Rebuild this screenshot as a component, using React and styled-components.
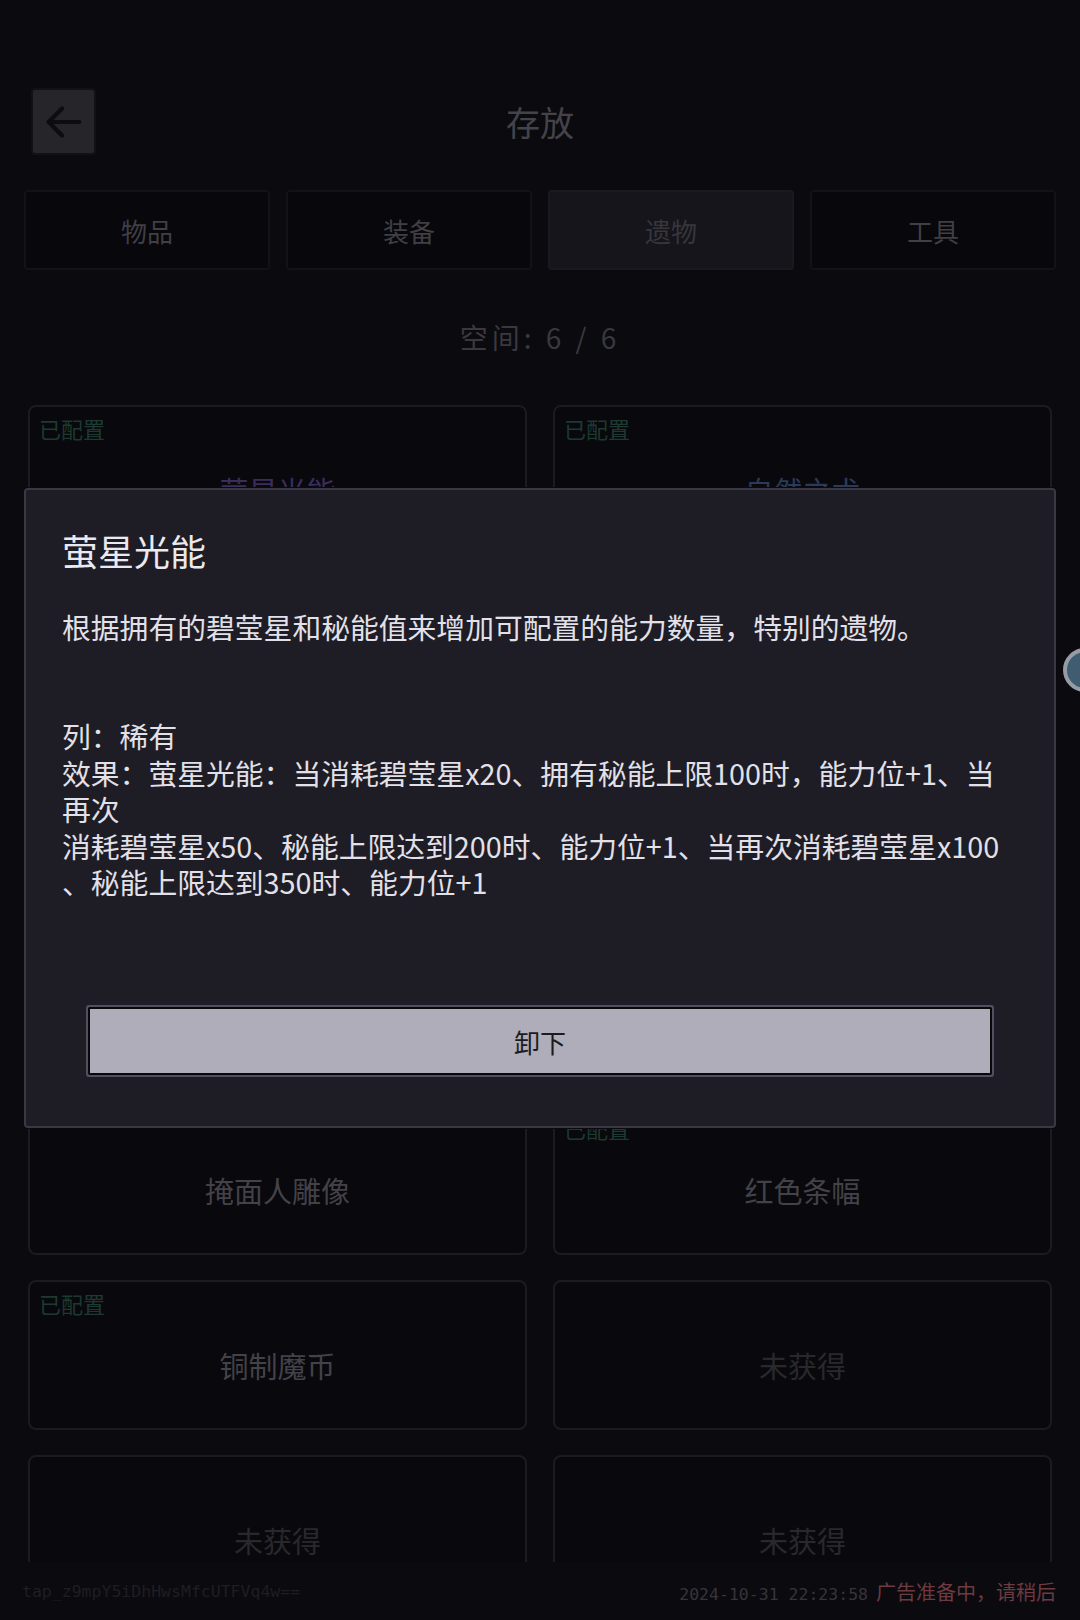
import React from 'react'
import styled, { createGlobalStyle } from 'styled-components'

const GlobalStyle = createGlobalStyle`
  html, body {
    margin: 0;
    padding: 0;
    background: #0b0a0f;
    overflow: hidden;
  }
  * { box-sizing: border-box; }
`

const Page = styled.div`
  position: relative;
  width: 1080px;
  height: 1620px;
  background: #0b0a0f;
  font-family: "Noto Sans CJK SC", "Noto Sans", sans-serif;
  display: flex;
  flex-direction: column;
  overflow: hidden;
`

const Header = styled.div`
  position: relative;
  height: 67px;
  margin-top: 88px;
  display: flex;
  align-items: center;
  justify-content: center;
`

const BackButton = styled.button`
  position: absolute;
  left: 31px;
  top: 0;
  width: 65px;
  height: 67px;
  background: #262529;
  border: 2px solid #121115;
  border-radius: 4px;
  display: flex;
  align-items: center;
  justify-content: center;
  padding: 0;
  cursor: pointer;
`

const Title = styled.h1`
  margin: 0;
  font-size: 34px;
  font-weight: 400;
  color: #444349;
`

const Tabs = styled.div`
  display: grid;
  grid-template-columns: repeat(4, 1fr);
  gap: 16px;
  padding: 0 24px;
  margin-top: 35px;
`

const Tab = styled.div`
  height: 80px;
  background: ${p => (p.active ? '#16151b' : '#08070b')};
  border: 2px solid ${p => (p.active ? '#1a191f' : '#131217')};
  border-radius: 4px;
  display: flex;
  align-items: center;
  justify-content: center;
  font-size: 26px;
  color: ${p => (p.active ? '#37363c' : '#403f45')};
`

const Capacity = styled.div`
  margin-top: 47px;
  text-align: center;
  font-size: 28px;
  line-height: 40px;
  letter-spacing: 4px;
  color: #39383e;
`

const ListArea = styled.div`
  margin-top: 48px;
  height: 1157px;
  overflow: hidden;
  padding: 0 28px;
`

const Grid = styled.div`
  display: grid;
  grid-template-columns: 1fr 1fr;
  column-gap: 26px;
  row-gap: 25px;
`

const Card = styled.div`
  height: 150px;
  background: #09080c;
  border: 2px solid #1c1b22;
  border-radius: 8px;
  padding: 8px 9px;
  display: flex;
  flex-direction: column;
`

const Badge = styled.div`
  height: 26px;
  line-height: 26px;
  font-size: 22px;
  color: #1d3a31;
  visibility: ${p => (p.show ? 'visible' : 'hidden')};
`

const ItemName = styled.div`
  margin-top: 29px;
  text-align: center;
  font-size: 29px;
  line-height: 40px;
  color: ${p => p.tone};
`

const Footer = styled.div`
  flex: 1;
  display: flex;
  align-items: center;
  justify-content: space-between;
  padding: 0 24px 0 22px;
`

const DeviceId = styled.span`
  font-family: "DejaVu Sans Mono", monospace;
  font-size: 16.5px;
  color: #1f1e24;
`

const Status = styled.div`
  display: flex;
  align-items: baseline;
  gap: 8px;
`

const Stamp = styled.span`
  font-family: "DejaVu Sans Mono", monospace;
  font-size: 16.5px;
  color: #36353b;
`

const AdNote = styled.span`
  font-size: 20px;
  color: #6c3a40;
`

const Modal = styled.div`
  position: absolute;
  left: 24px;
  top: 488px;
  width: 1032px;
  height: 640px;
  background: #1e1c24;
  border: 2px solid #3a3845;
  border-radius: 4px;
  box-shadow: 0 0 0 1px #0a090d;
  padding: 36px 36px 49px;
  display: flex;
  flex-direction: column;
`

const ModalTitle = styled.h2`
  margin: 0;
  font-size: 36px;
  line-height: 48px;
  font-weight: 400;
  color: #ebe9f0;
`

const Description = styled.p`
  margin: 33px 0 0;
  font-size: 28.8px;
  line-height: 40px;
  color: #e2e0e8;
`

const Details = styled.div`
  margin-top: 71px;
  font-size: 28.8px;
  line-height: 36.5px;
  color: #e2e0e8;
`

const UnequipButton = styled.button`
  margin: auto 24px 0;
  height: 72px;
  background: #afadb9;
  border: 2px solid #52505e;
  border-radius: 3px;
  box-shadow: inset 0 0 0 2px #08080a;
  font-family: "Noto Sans CJK SC", sans-serif;
  font-size: 26px;
  color: #1c1b22;
  cursor: pointer;
`

const FloatBubble = styled.div`
  position: absolute;
  left: 1063px;
  top: 648px;
  width: 44px;
  height: 44px;
  border-radius: 50%;
  background: #3f5c70;
  border: 4px solid #969ba5;
`

const items = [
  { name: '萤星光能', tone: '#3a2d5c', configured: true },
  { name: '自然之术', tone: '#2a3a58', configured: true },
  { name: '', tone: '#403f45', configured: false },
  { name: '', tone: '#403f45', configured: false },
  { name: '', tone: '#403f45', configured: false },
  { name: '', tone: '#403f45', configured: false },
  { name: '', tone: '#403f45', configured: false },
  { name: '', tone: '#403f45', configured: false },
  { name: '掩面人雕像', tone: '#434248', configured: false },
  { name: '红色条幅', tone: '#434248', configured: true },
  { name: '铜制魔币', tone: '#434248', configured: true },
  { name: '未获得', tone: '#29282d', configured: false },
  { name: '未获得', tone: '#29282d', configured: false },
  { name: '未获得', tone: '#29282d', configured: false },
]

const tabs = ['物品', '装备', '遗物', '工具']

const App = () => {
  return <Page>
    <GlobalStyle />
    <Header>
      <BackButton>
        <svg width="46" height="46" viewBox="0 0 24 24" fill="none" stroke="#0d0c10" strokeWidth="2.2" strokeLinecap="round" strokeLinejoin="round">
          <path d="m11 19-7-7 7-7" />
          <path d="M20 12H4" />
        </svg>
      </BackButton>
      <Title>存放</Title>
    </Header>

    <Tabs>
      {tabs.map(t => <Tab key={t} active={t === '遗物'}>{t}</Tab>)}
    </Tabs>

    <Capacity>空间: 6 / 6</Capacity>

    <ListArea>
      <Grid>
        {items.map((it, i) => (
          <Card key={i}>
            <Badge show={it.configured}>已配置</Badge>
            <ItemName tone={it.tone}>{it.name}</ItemName>
          </Card>
        ))}
      </Grid>
    </ListArea>

    <Footer>
      <DeviceId>tap_z9mpY5iDhHwsMfcUTFVq4w==</DeviceId>
      <Status>
        <Stamp>2024-10-31 22:23:58</Stamp>
        <AdNote>广告准备中，请稍后</AdNote>
      </Status>
    </Footer>

    <Modal>
      <ModalTitle>萤星光能</ModalTitle>
      <Description>根据拥有的碧莹星和秘能值来增加可配置的能力数量，特别的遗物。</Description>
      <Details>
        列：稀有<br />
        效果：萤星光能：当消耗碧莹星x20、拥有秘能上限100时，能力位+1、当<br />
        再次<br />
        消耗碧莹星x50、秘能上限达到200时、能力位+1、当再次消耗碧莹星x100<br />
        、秘能上限达到350时、能力位+1
      </Details>
      <UnequipButton>卸下</UnequipButton>
    </Modal>

    <FloatBubble />
  </Page>
}

export default App
